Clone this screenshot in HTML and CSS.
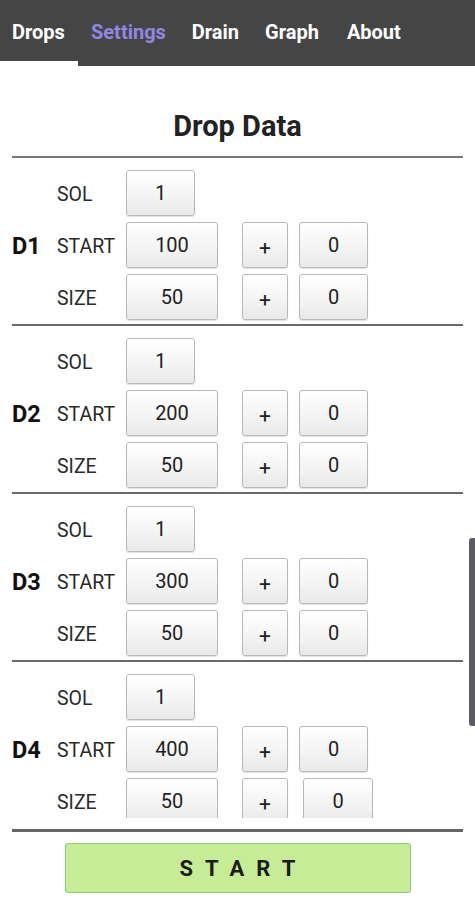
FILE: index.html
```html
<!DOCTYPE html>
<html>
<head>
<meta charset="utf-8">
<link rel="stylesheet" href="styles.css">
</head>
<body>
<div class="app">
  <nav class="tabs">
    <span class="tab current">Drops</span>
    <span class="tab selected">Settings</span>
    <span class="tab">Drain</span>
    <span class="tab">Graph</span>
    <span class="tab">About</span>
  </nav>
  <h1 class="title">Drop Data</h1>
  <div class="list">
    <section class="drop">
      <div class="dname">D1</div>
      <div class="grid">
        <span class="lbl">SOL</span><span class="box sm">1</span><span></span><span></span>
        <span class="lbl">START</span><span class="box">100</span><span class="box plus">+</span><span class="box sm">0</span>
        <span class="lbl">SIZE</span><span class="box">50</span><span class="box plus">+</span><span class="box sm">0</span>
      </div>
    </section>
    <section class="drop">
      <div class="dname">D2</div>
      <div class="grid">
        <span class="lbl">SOL</span><span class="box sm">1</span><span></span><span></span>
        <span class="lbl">START</span><span class="box">200</span><span class="box plus">+</span><span class="box sm">0</span>
        <span class="lbl">SIZE</span><span class="box">50</span><span class="box plus">+</span><span class="box sm">0</span>
      </div>
    </section>
    <section class="drop">
      <div class="dname">D3</div>
      <div class="grid">
        <span class="lbl">SOL</span><span class="box sm">1</span><span></span><span></span>
        <span class="lbl">START</span><span class="box">300</span><span class="box plus">+</span><span class="box sm">0</span>
        <span class="lbl">SIZE</span><span class="box">50</span><span class="box plus">+</span><span class="box sm">0</span>
      </div>
    </section>
    <section class="drop">
      <div class="dname">D4</div>
      <div class="grid">
        <span class="lbl">SOL</span><span class="box sm">1</span><span></span><span></span>
        <span class="lbl">START</span><span class="box">400</span><span class="box plus">+</span><span class="box sm">0</span>
        <span class="lbl">SIZE</span><span class="box">50</span><span class="box plus">+</span><span class="box sm nudge">0</span>
      </div>
    </section>
  </div>
  <div class="footer-line"></div>
  <div class="footer">
    <button class="start">START</button>
  </div>
  <div class="scrollbar"></div>
</div>
</body>
</html>
```
FILE: styles.css
```css
* { box-sizing: border-box; }
html, body { margin: 0; padding: 0; background: #fff; }
body {
  font-family: Roboto, "Liberation Sans", sans-serif;
  color: #222;
  width: 475px;
  height: 900px;
  overflow: hidden;
}
.app { position: relative; width: 475px; height: 900px; }

.tabs {
  display: flex;
  height: 66px;
  background: #454545;
  padding-top: 2px;
}
.tab {
  display: flex;
  align-items: center;
  height: 59px;
  padding: 0 13px;
  font-size: 20px;
  font-weight: 700;
  color: #fff;
}
.tab.current {
  padding-left: 12px;
  width: 78px;
  height: 64px;
  border-bottom: 5px solid #fff;
}
.tab.selected { color: #8f87e2; }
.tab:last-child { padding-left: 15px; }

.title {
  margin: 0 12px;
  padding: 46px 0 16px;
  font-size: 29px;
  line-height: 28px;
  font-weight: 700;
  text-align: center;
  border-bottom: 2px solid #777;
}

.list {
  height: 660px;
  overflow: hidden;
}
.drop {
  display: flex;
  align-items: center;
  margin: 0 12px;
  padding: 12px 0 4px;
  border-bottom: 2px solid #6a6a6a;
}
.dname {
  width: 45px;
  font-size: 23.5px;
  font-weight: 700;
  color: #111;
  padding-top: 2px;
}
.grid {
  display: grid;
  grid-template-columns: 69px 92px 70px 80px;
  grid-auto-rows: 46px;
  row-gap: 6px;
}
.lbl {
  display: flex;
  align-items: center;
  font-size: 19.5px;
  color: #2a2a2a;
  padding-top: 3px;
}
.box {
  display: flex;
  align-items: center;
  justify-content: center;
  width: 92px;
  height: 46px;
  font-size: 20px;
  color: #222;
  background: linear-gradient(#ffffff, #f3f3f3 60%, #e9e9e9);
  border: 1px solid #b8b8b8;
  border-radius: 3px;
  box-shadow: 0 1px 1px rgba(0,0,0,0.12);
}
.box.sm { width: 69px; justify-self: end; }
.grid > .box.sm:nth-child(2) { justify-self: start; }
.box.plus {
  width: 46px;
  justify-self: end;
  padding-top: 6px;
  font-size: 21px;
}
.box.nudge { width: 70px; margin-right: -5px; }

.footer-line {
  margin: 11px 12px 0;
  border-top: 3px solid #666;
}
.footer {
  display: flex;
  justify-content: center;
  padding-top: 11px;
}
.start {
  width: 346px;
  height: 50px;
  background: #c6ec97;
  border: 1px solid #94c973;
  border-radius: 3px;
  font-family: Roboto, "Liberation Sans", sans-serif;
  font-size: 22px;
  font-weight: 700;
  color: #1c1c1c;
  letter-spacing: 12px;
  text-indent: 12px;
  padding: 0;
}

.scrollbar {
  position: absolute;
  right: 0;
  top: 538px;
  width: 6px;
  height: 188px;
  background: #5b5b63;
  border-radius: 3px 0 0 3px;
}
```
